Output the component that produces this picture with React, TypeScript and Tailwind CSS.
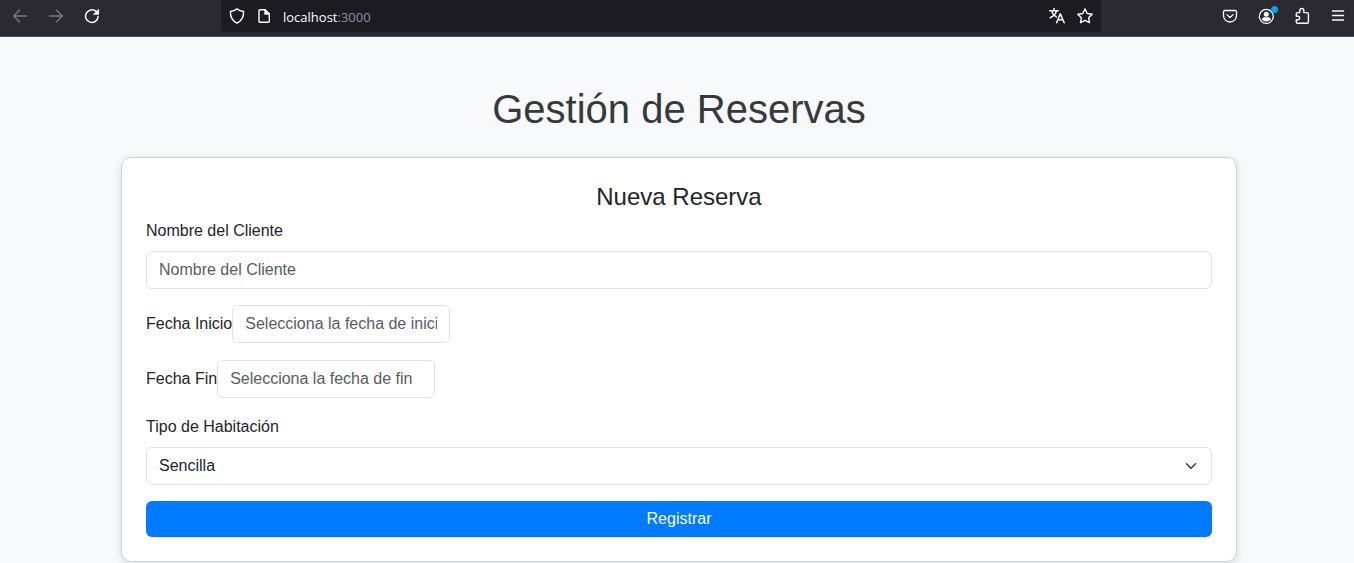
import type { ReactNode } from "react";

function Icon({ children, width = 1.3 }: { children: ReactNode; width?: number }) {
  return (
    <svg
      viewBox="0 0 16 16"
      className="block size-4 overflow-visible"
      fill="none"
      stroke="currentColor"
      strokeWidth={width}
      strokeLinecap="round"
      strokeLinejoin="round"
      aria-hidden="true"
    >
      {children}
    </svg>
  );
}

function ToolButton({
  label,
  disabled = false,
  children,
}: {
  label: string;
  disabled?: boolean;
  children: ReactNode;
}) {
  return (
    <button
      type="button"
      aria-label={label}
      disabled={disabled}
      className="relative size-4 shrink-0 text-[#fbfbfe] disabled:text-[#7c7b82]"
    >
      {children}
    </button>
  );
}

function BrowserBar() {
  return (
    <header className="flex h-[37px] items-start border-b border-[#52525e] bg-[#2b2a33]">
      <div className="flex h-8 w-[221px] shrink-0 items-center gap-5 pl-3">
        <ToolButton label="Atrás" disabled>
          <Icon>
            <path d="M14.5 8H1.6M7.4 2.2 1.6 8l5.8 5.8" />
          </Icon>
        </ToolButton>
        <ToolButton label="Adelante" disabled>
          <Icon>
            <path d="M1.5 8h12.9M8.6 2.2 14.4 8l-5.8 5.8" />
          </Icon>
        </ToolButton>
        <ToolButton label="Recargar">
          <Icon width={1.5}>
            <path d="M14.1 8.6A6.3 6.3 0 1 1 12 3.4" />
            <path d="M14.6 1.6v4.7H9.9z" fill="currentColor" strokeWidth="0.8" />
          </Icon>
        </ToolButton>
      </div>

      <div className="flex h-8 min-w-0 flex-1 items-center gap-[11px] rounded-b bg-[#1c1b22] px-2">
        <ToolButton label="Protección">
          <Icon width={1.4}>
            <path d="M8 .9c1.900 1.500 4 2.300 6.600 2.600.2 4.900-1.700 9.200-6.600 11.600C3.100 12.700 1.200 8.400 1.400 3.500 4 3.200 6.100 2.400 8 .9z" />
          </Icon>
        </ToolButton>
        <ToolButton label="Información del sitio">
          <Icon width={1.4}>
            <path d="M4 1.700h5l4.300 4.300v7.300a1 1 0 0 1-1 1H4a1 1 0 0 1-1-1V2.700a1 1 0 0 1 1-1z" />
            <path d="M9 1.700V6h4.300z" fill="currentColor" />
          </Icon>
        </ToolButton>
        <p className="min-w-0 flex-1 truncate pt-0.5 font-['Open_Sans',sans-serif] text-[13px] leading-5 text-[#8f8f9d]">
          <span className="text-[#fbfbfe]">localhost</span>:3000
        </p>
        <div className="flex gap-3">
          <ToolButton label="Traducir">
            <Icon width={1.5}>
              <path d="M.7 2.700h8.600M5 .6v2.100M7.600 2.700C6.900 5.700 4.500 8.300 1.200 9.700M2.600 2.900C3.300 5.400 5 7.600 7.300 8.900" />
              <path d="M7.600 14.700 11.300 5.900 15.200 14.700M8.900 11.800h5" />
            </Icon>
          </ToolButton>
          <ToolButton label="Añadir a marcadores">
            <Icon width={1.4}>
              <path d="m8 .9 2.200 4.600 5 .7-3.600 3.500.9 5L8 12.300l-4.500 2.400.9-5L.8 6.200l5-.7z" />
            </Icon>
          </ToolButton>
        </div>
      </div>

      <div className="flex h-8 w-[253px] shrink-0 items-center justify-end gap-5 pr-2">
        <ToolButton label="Guardar en Pocket">
          <Icon>
            <path d="M2.700 2.500h10.600a1.200 1.200 0 0 1 1.200 1.200V7.500a6.500 6.500 0 0 1-13 0V3.700a1.200 1.200 0 0 1 1.200-1.200z" />
            <path d="M4.900 6.600 8 9.500l3.100-2.900" />
          </Icon>
        </ToolButton>
        <ToolButton label="Cuenta">
          <Icon>
            <circle cx="8.300" cy="8.400" r="7" />
            <circle cx="8.300" cy="6.200" r="2.500" fill="currentColor" stroke="none" />
            <path d="M3.700 11.400c.6-1.500 1.700-2.100 3-2.100h3.200c1.300 0 2.400.6 3 2.100-1.100 1.300-2.700 2-4.600 2s-3.500-.7-4.600-2z" fill="currentColor" stroke="none" />
          </Icon>
          <span className="absolute -top-0.5 -right-1 size-[7px] rounded-full bg-[#00a8f0]" />
        </ToolButton>
        <ToolButton label="Extensiones">
          <Icon width={1.4}>
            <path d="M5.800 4.600V2.500a2 2 0 0 1 4 0v2.100h3.400a1.200 1.200 0 0 1 1.200 1.200v8.300a1.200 1.200 0 0 1-1.200 1.200H3.500a1.200 1.200 0 0 1-1.200-1.200v-2.300h1.700a1.800 1.800 0 0 0 0-3.600H2.300V5.800a1.200 1.200 0 0 1 1.200-1.200z" />
          </Icon>
        </ToolButton>
        <ToolButton label="Menú">
          <Icon>
            <path d="M2.500 3h11M2.500 7.500h11M2.500 12h11" />
          </Icon>
        </ToolButton>
      </div>
    </header>
  );
}

function DateField({ id, label, placeholder }: { id: string; label: string; placeholder: string }) {
  return (
    <div className="mb-4 flex h-[39px] items-start">
      <label htmlFor={id} className="py-[7px]">
        {label}
      </label>
      <input
        id={id}
        type="text"
        placeholder={placeholder}
        className="h-[38px] w-[218px] rounded-md border border-[#dee2e6] bg-white px-3 placeholder:text-[#595c5f]"
      />
    </div>
  );
}

export default function App() {
  return (
    <div className="min-h-screen bg-[#f8f9fa] font-['Liberation_Sans',Arial,sans-serif] text-base text-[#212529]">
      <BrowserBar />
      <main className="pt-12 pl-1">
        <div className="mx-auto max-w-[1140px] px-3">
          <h1 className="mb-6 text-center text-[40px] leading-[48px] text-[#343a40]">
            Gestión de Reservas
          </h1>
          <section className="rounded-[10px] border border-[#d0d1d2] bg-white p-6 shadow-[0_2px_8px_rgba(0,0,0,0.12)]">
            <h2 className="mb-2 text-center text-2xl leading-[29px]">Nueva Reserva</h2>
            <form onSubmit={(event) => event.preventDefault()}>
              <div className="mb-4">
                <label htmlFor="cliente" className="mb-2 block">
                  Nombre del Cliente
                </label>
                <input
                  id="cliente"
                  type="text"
                  placeholder="Nombre del Cliente"
                  className="block h-[38px] w-full rounded-md border border-[#dee2e6] bg-white px-3 placeholder:text-[#595c5f]"
                />
              </div>
              <DateField id="inicio" label="Fecha Inicio" placeholder="Selecciona la fecha de inicio" />
              <DateField id="fin" label="Fecha Fin" placeholder="Selecciona la fecha de fin" />
              <div className="mb-4">
                <label htmlFor="habitacion" className="mb-2 block">
                  Tipo de Habitación
                </label>
                <div className="relative">
                  <select
                    id="habitacion"
                    defaultValue="Sencilla"
                    className="block h-[38px] w-full appearance-none rounded-md border border-[#dee2e6] bg-white pr-9 pl-3"
                  >
                    <option>Sencilla</option>
                  </select>
                  <svg
                    viewBox="0 0 16 16"
                    className="pointer-events-none absolute top-[13px] right-[15px] h-3 w-3"
                    fill="none"
                    stroke="#343a40"
                    strokeWidth="2"
                    strokeLinecap="round"
                    strokeLinejoin="round"
                    aria-hidden="true"
                  >
                    <path d="m2 5 6 6 6-6" />
                  </svg>
                </div>
              </div>
              <button type="submit" className="block h-9 w-full rounded-md bg-[#007bff] text-white">
                Registrar
              </button>
            </form>
          </section>
        </div>
      </main>
    </div>
  );
}
